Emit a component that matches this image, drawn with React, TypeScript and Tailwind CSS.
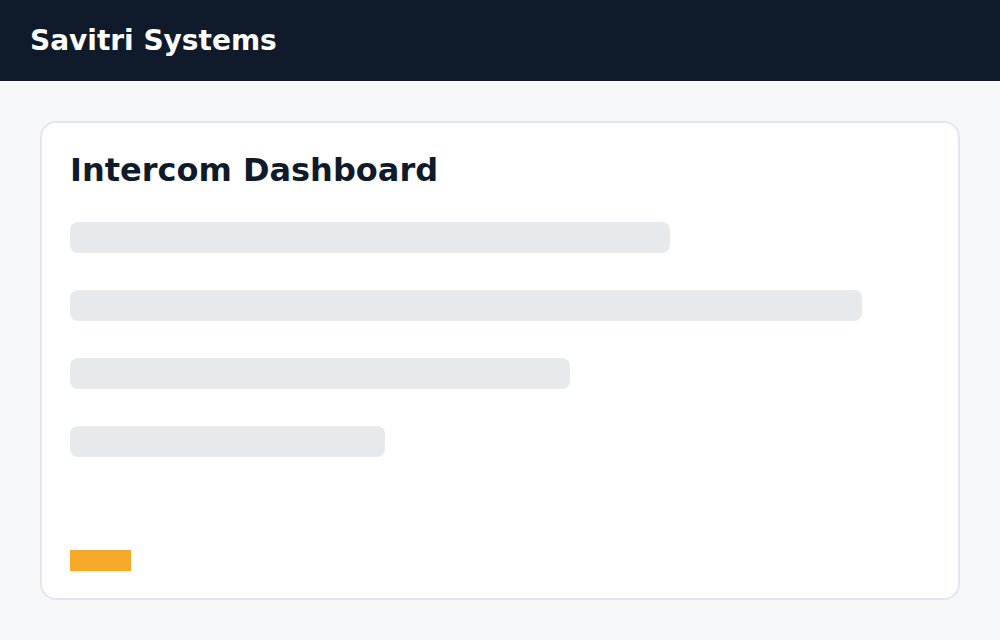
import React from "react";

export default function App() {
  const bars = [600, 792, 500, 315];
  return (
    <div className="min-h-[640px] bg-[#f7f8fa]" style={{ fontFamily: '"DejaVu Sans", sans-serif' }}>
      <header className="h-[81px] bg-[#0f1b2b] flex items-center px-[30px]">
        <h1 className="text-[28px] font-bold text-white leading-none">Savitri Systems</h1>
      </header>
      <main className="px-[40px] pt-[40px]">
        <div className="h-[479px] rounded-[16px] border-2 border-[#e3e6ea] bg-white px-[28px] pt-[27px] flex flex-col">
          <h2 className="text-[32px] font-bold text-[#0f1b2b] leading-[40px]">Intercom Dashboard</h2>
          <div className="mt-[32px] flex flex-col gap-[37px]">
            {bars.map((w, i) => (
              <div key={i} className="h-[31px] rounded-[8px] bg-[#e7eaed]" style={{ width: w }} />
            ))}
          </div>
          <div className="mt-[93px] w-[61px] h-[21px] bg-[#f6a829]" />
        </div>
      </main>
    </div>
  );
}
